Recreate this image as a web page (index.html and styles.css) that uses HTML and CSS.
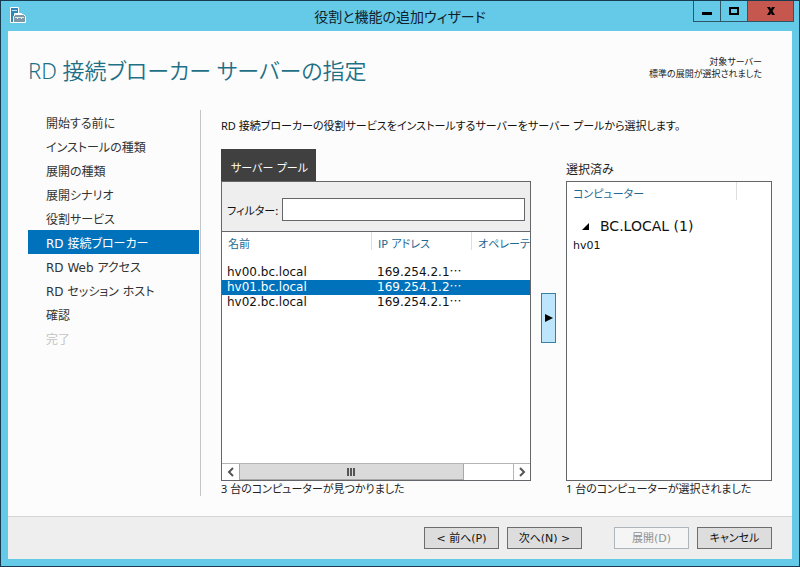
FILE: index.html
```html
<!DOCTYPE html>
<html lang="ja">
<head>
<meta charset="utf-8">
<title>役割と機能の追加ウィザード</title>
<link rel="stylesheet" href="styles.css">
</head>
<body>
<div class="window">
  <header class="titlebar">
    <svg class="app-icon" viewBox="0 0 16 16" aria-hidden="true">
      <path d="M.5.5h8v6h-4v9h-4z" fill="#2f86b8" stroke="#fff"/>
      <path d="M2 3.500h5" stroke="#bfe6f5"/>
      <path d="M7.500 8V6.500h4V8" fill="none" stroke="#fff"/>
      <path d="M3.500 9.500l2-2h8l2 2v6h-12z" fill="#7f98a8" stroke="#fff"/>
      <path d="M5 10.500h9M7.500 10v2M11.500 10v2" stroke="#dfe8ec"/>
    </svg>
    <div class="window-title">役割と機能の追加ウィザード</div>
    <div class="window-controls">
      <button class="control" type="button" aria-label="最小化"><svg width="12" height="12"><path d="M1 7h10v3H1z"/></svg></button>
      <button class="control" type="button" aria-label="最大化"><svg width="12" height="12"><path d="M1 2h10v8H1zM3 4v4h6V4z" fill-rule="evenodd"/></svg></button>
      <button class="control close" type="button" aria-label="閉じる"><svg width="12" height="12"><path d="M2 2h3l1 2 1-2h3L7.500 6l2.500 4H7L6 8l-1 2H2l2.500-4z"/></svg></button>
    </div>
  </header>

  <div class="client">
    <div class="heading">
      <h1>RD 接続ブローカー サーバーの指定</h1>
      <p class="target">対象サーバー<br>標準の展開が選択されました</p>
    </div>

    <div class="body">
      <nav class="steps">
        <a href="#">開始する前に</a>
        <a href="#">インストールの種類</a>
        <a href="#">展開の種類</a>
        <a href="#">展開シナリオ</a>
        <a href="#">役割サービス</a>
        <a href="#" class="current" aria-current="step">RD 接続ブローカー</a>
        <a href="#">RD Web アクセス</a>
        <a href="#">RD セッション ホスト</a>
        <a href="#">確認</a>
        <a class="disabled">完了</a>
      </nav>

      <main class="content">
        <p class="intro">RD 接続ブローカーの役割サービスをインストールするサーバーをサーバー プールから選択します。</p>
        <div class="picker">
          <button class="tab" type="button">サーバー プール</button>
          <div class="selected-label">選択済み</div>

          <section class="panel pool">
            <div class="filter">
              <label for="filter">フィルター:</label>
              <input id="filter" type="text">
            </div>
            <div class="list">
              <table class="servers">
                <colgroup><col class="col-name"><col class="col-ip"><col></colgroup>
                <thead>
                  <tr><th><span>名前</span></th><th><span>IP アドレス</span></th><th><span>オペレーティ</span></th></tr>
                </thead>
                <tbody>
                  <tr><td>hv00.bc.local</td><td>169.254.2.1<span class="more">…</span></td><td></td></tr>
                  <tr class="chosen"><td>hv01.bc.local</td><td>169.254.1.2<span class="more">…</span></td><td></td></tr>
                  <tr><td>hv02.bc.local</td><td>169.254.2.1<span class="more">…</span></td><td></td></tr>
                </tbody>
              </table>
            </div>
            <div class="scrollbar">
              <button type="button" aria-label="左へスクロール"><svg width="8" height="10"><path d="M6 1L2 5l4 4" fill="none" stroke="#555" stroke-width="2"/></svg></button>
              <div class="track"><div class="thumb"><svg width="9" height="8"><path d="M0 0h2v8H0zM3 0h2v8H3zM6 0h2v8H6z" fill="#555"/></svg></div></div>
              <button type="button" aria-label="右へスクロール"><svg width="8" height="10"><path d="M2 1l4 4-4 4" fill="none" stroke="#555" stroke-width="2"/></svg></button>
            </div>
          </section>

          <button class="add" type="button" aria-label="追加"><svg width="8" height="8"><path d="M0 0l8 4-8 4z"/></svg></button>

          <section class="panel selection">
            <div class="computer-head"><span>コンピューター</span></div>
            <div class="group"><svg width="8" height="7"><path d="M7 0v7H0z"/></svg><span>BC.LOCAL (1)</span></div>
            <div class="member">hv01</div>
          </section>

          <p class="count pool-count">3 台のコンピューターが見つかりました</p>
          <p class="count selection-count">1 台のコンピューターが選択されました</p>
        </div>
      </main>
    </div>

    <footer class="actions">
      <button type="button">&lt; 前へ(P)</button>
      <button type="button">次へ(N) &gt;</button>
      <button type="button" class="deploy" disabled>展開(D)</button>
      <button type="button">キャンセル</button>
    </footer>
  </div>
</div>
</body>
</html>
```

FILE: styles.css
```css
* {
  box-sizing: border-box;
}

body {
  margin: 0;
  color: #222;
  font: 12px/16px "DejaVu Sans", "Noto Sans CJK JP", sans-serif;
  font-feature-settings: "palt";
}

h1,
p {
  margin: 0;
  font-weight: 400;
}

button,
input {
  padding: 0;
  margin: 0;
  color: inherit;
  font: inherit;
  font-feature-settings: inherit;
  border-radius: 0;
}

svg {
  display: block;
}

.window {
  display: flex;
  flex-direction: column;
  min-height: 100vh;
  padding: 0 7px 7px;
  background: #65c9e8;
  border: 1px solid #173c50;
}

.titlebar {
  display: grid;
  grid-template-columns: 106px 1fr 106px;
  height: 30px;
}

.app-icon {
  width: 16px;
  height: 16px;
  margin: 6px 2px;
}

.window-title {
  color: #10222b;
  font-family: "Noto Sans CJK JP", sans-serif;
  font-size: 14px;
  line-height: 30px;
  text-align: center;
}

.window-controls {
  display: flex;
  justify-content: flex-end;
  height: 21px;
  margin-right: -2px;
}

.control {
  display: grid;
  place-items: center;
  width: 27px;
  background: none;
  border: 1px solid #2d5666;
  border-top: 0;
  border-right: 0;
}

.control.close {
  width: 47px;
  background: #c5574e;
  border-right: 1px solid #2d5666;
}

.client {
  display: flex;
  flex: 1;
  flex-direction: column;
  background: #fcfcfc;
}

.heading {
  display: flex;
  justify-content: space-between;
  height: 79px;
  padding: 24px 30px 0 20px;
}

h1 {
  color: #1f7086;
  font-family: "Noto Sans", "Noto Sans CJK JP", sans-serif;
  font-size: 22px;
  font-weight: 350;
  line-height: 30px;
}

.target {
  padding-top: 1px;
  font-family: "Noto Sans CJK JP", sans-serif;
  font-size: 9px;
  line-height: 12px;
  text-align: right;
}

.body {
  display: flex;
  flex: 1;
  padding: 0 20px 20px;
}

.steps {
  flex: none;
  width: 173px;
  padding-right: 1px;
  border-right: 1px solid #c4c4c4;
}

.steps a {
  display: block;
  height: 24px;
  padding: 4px 0 0 18px;
  color: #333;
  line-height: 20px;
  text-decoration: none;
}

.steps .current {
  color: #fff;
  background: #0072bc;
}

.steps .disabled {
  color: #c2c2c2;
}

.content {
  display: flex;
  flex: 1;
  flex-direction: column;
  min-width: 0;
  padding-left: 20px;
}

.intro {
  height: 39px;
  padding-top: 8px;
  color: #111;
  font-family: "Noto Sans", "Noto Sans CJK JP", sans-serif;
  font-size: 11px;
  white-space: nowrap;
}

.picker {
  display: grid;
  flex: 1;
  grid-template-columns: minmax(0, 310fr) 15px minmax(0, 206fr);
  grid-template-rows: 32px 1fr 15px;
  column-gap: 10px;
}

.tab {
  justify-self: start;
  padding: 8px 8px 0 10px;
  color: #fff;
  font-size: 11px;
  background: #404040;
  border: 0;
}

.selected-label {
  grid-column: 3;
  padding-top: 13px;
}

.panel {
  display: flex;
  flex-direction: column;
  color: #111;
  background: #fff;
  border: 1px solid #646669;
}

.filter {
  display: flex;
  gap: 4px;
  align-items: center;
  height: 49px;
  padding: 5px 5px 0;
  background: #eee;
}

.filter label {
  padding-top: 2px;
  font-family: "Noto Sans CJK JP", sans-serif;
  font-size: 11px;
}

.filter input {
  flex: 1;
  min-width: 0;
  height: 23px;
  background: #fff;
  border: 1px solid #646669;
}

.list {
  flex: 1;
  overflow: hidden;
  border-top: 1px solid #646669;
}

.servers {
  width: 100%;
  table-layout: fixed;
  border-spacing: 0;
}

.col-name {
  width: 150px;
}

.col-ip {
  width: 100px;
}

.servers th {
  height: 33px;
  padding: 0;
  color: #1f6a92;
  font-size: 11px;
  font-weight: 400;
  text-align: left;
  vertical-align: top;
  white-space: nowrap;
}

.servers th span {
  display: block;
  height: 18px;
  padding: 5px 0 0 6px;
  border-right: 1px solid #dedede;
}

.servers th:last-child span {
  border: 0;
}

.servers td {
  height: 15px;
  padding: 0 0 0 5px;
  line-height: 15px;
  white-space: nowrap;
}

.more {
  font-family: "Noto Sans CJK JP", sans-serif;
  line-height: 0;
}

.chosen {
  color: #fff;
  background: #0072bc;
}

.scrollbar {
  display: flex;
  height: 17px;
  border-top: 1px solid #b4b4b4;
}

.scrollbar button {
  display: grid;
  place-items: center;
  width: 17px;
  background: #fff;
  border: 0;
}

.scrollbar button:last-child {
  border-left: 1px solid #b4b4b4;
}

.track {
  flex: 1;
}

.thumb {
  display: grid;
  place-items: center;
  width: 82%;
  height: 16px;
  background: #dadada;
  border: 1px solid #a8a8a8;
  border-top: 0;
}

.add {
  display: grid;
  align-self: center;
  place-items: center;
  height: 50px;
  margin-top: -26px;
  background: #bde6fc;
  border: 1px solid #3a7f9c;
}

.computer-head {
  padding: 0 34px 0 6px;
  color: #1f6a92;
  font-size: 11px;
}

.computer-head span {
  display: block;
  height: 18px;
  padding-top: 5px;
  border-right: 1px solid #dedede;
}

.group {
  display: flex;
  gap: 10px;
  align-items: center;
  padding: 17px 0 0 15px;
  font-size: 14px;
  line-height: 18px;
}

.member {
  padding: 3px 6px;
  font-size: 11px;
}

.count {
  font-family: "Noto Sans", "Noto Sans CJK JP", sans-serif;
  font-size: 11px;
  white-space: nowrap;
}

.selection-count {
  grid-column: 3;
}

.actions {
  display: flex;
  gap: 8px;
  justify-content: flex-end;
  height: 43px;
  padding: 10px 20px;
  background: #eee;
  border-top: 1px solid #d6d6d6;
}

.actions button {
  width: 75px;
  height: 22px;
  padding-top: 2px;
  color: #111;
  font-size: 11px;
  background: #ddd;
  border: 1px solid #6d6d6d;
}

.actions .deploy {
  margin-left: 24px;
  color: #929292;
  background: #f5f5f5;
  border-color: #afb5b8;
}
```
